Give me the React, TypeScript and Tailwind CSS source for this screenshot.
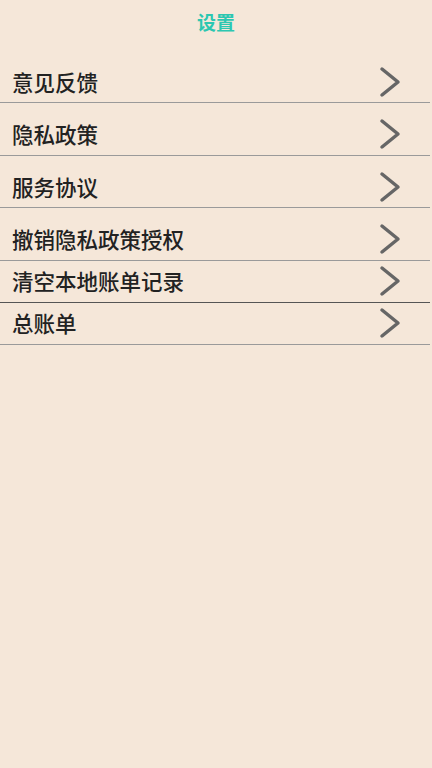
import React from "react";

const items: { label: string; mt: boolean; dark?: boolean }[] = [
  { label: "意见反馈", mt: false },
  { label: "隐私政策", mt: true },
  { label: "服务协议", mt: true },
  { label: "撤销隐私政策授权", mt: true },
  { label: "清空本地账单记录", mt: false, dark: true },
  { label: "总账单", mt: false },
];

function Chevron() {
  return (
    <svg width="24" height="32" viewBox="0 0 24 32" fill="none">
      <path d="M4 3 L20 16 L4 29" stroke="#666666" strokeWidth="3.5" strokeLinecap="round" strokeLinejoin="round" />
    </svg>
  );
}

export default function App() {
  return (
    <div
      className="w-[432px] h-[768px] bg-[#f5e7d9] flex flex-col"
      style={{ fontFamily: '"Noto Sans CJK SC", "Noto Sans", sans-serif' }}
    >
      <div className="h-[45px] flex items-center justify-center text-[19px] font-semibold text-[#2cc7b1]">
        设置
      </div>
      <div className="mt-[16px] w-[430px] flex flex-col">
        {items.map((it) => (
          <div
            key={it.label}
            className={`h-[42px] flex items-center justify-between pl-3 pr-[28px] border-b-[1.5px] ${
              it.dark ? "border-[#555555]" : "border-[#9a9a9a]"
            } ${it.mt ? "mt-[10.5px]" : ""}`}
          >
            <span className="text-[21.5px] font-medium text-[#222222] leading-none">{it.label}</span>
            <Chevron />
          </div>
        ))}
      </div>
    </div>
  );
}
